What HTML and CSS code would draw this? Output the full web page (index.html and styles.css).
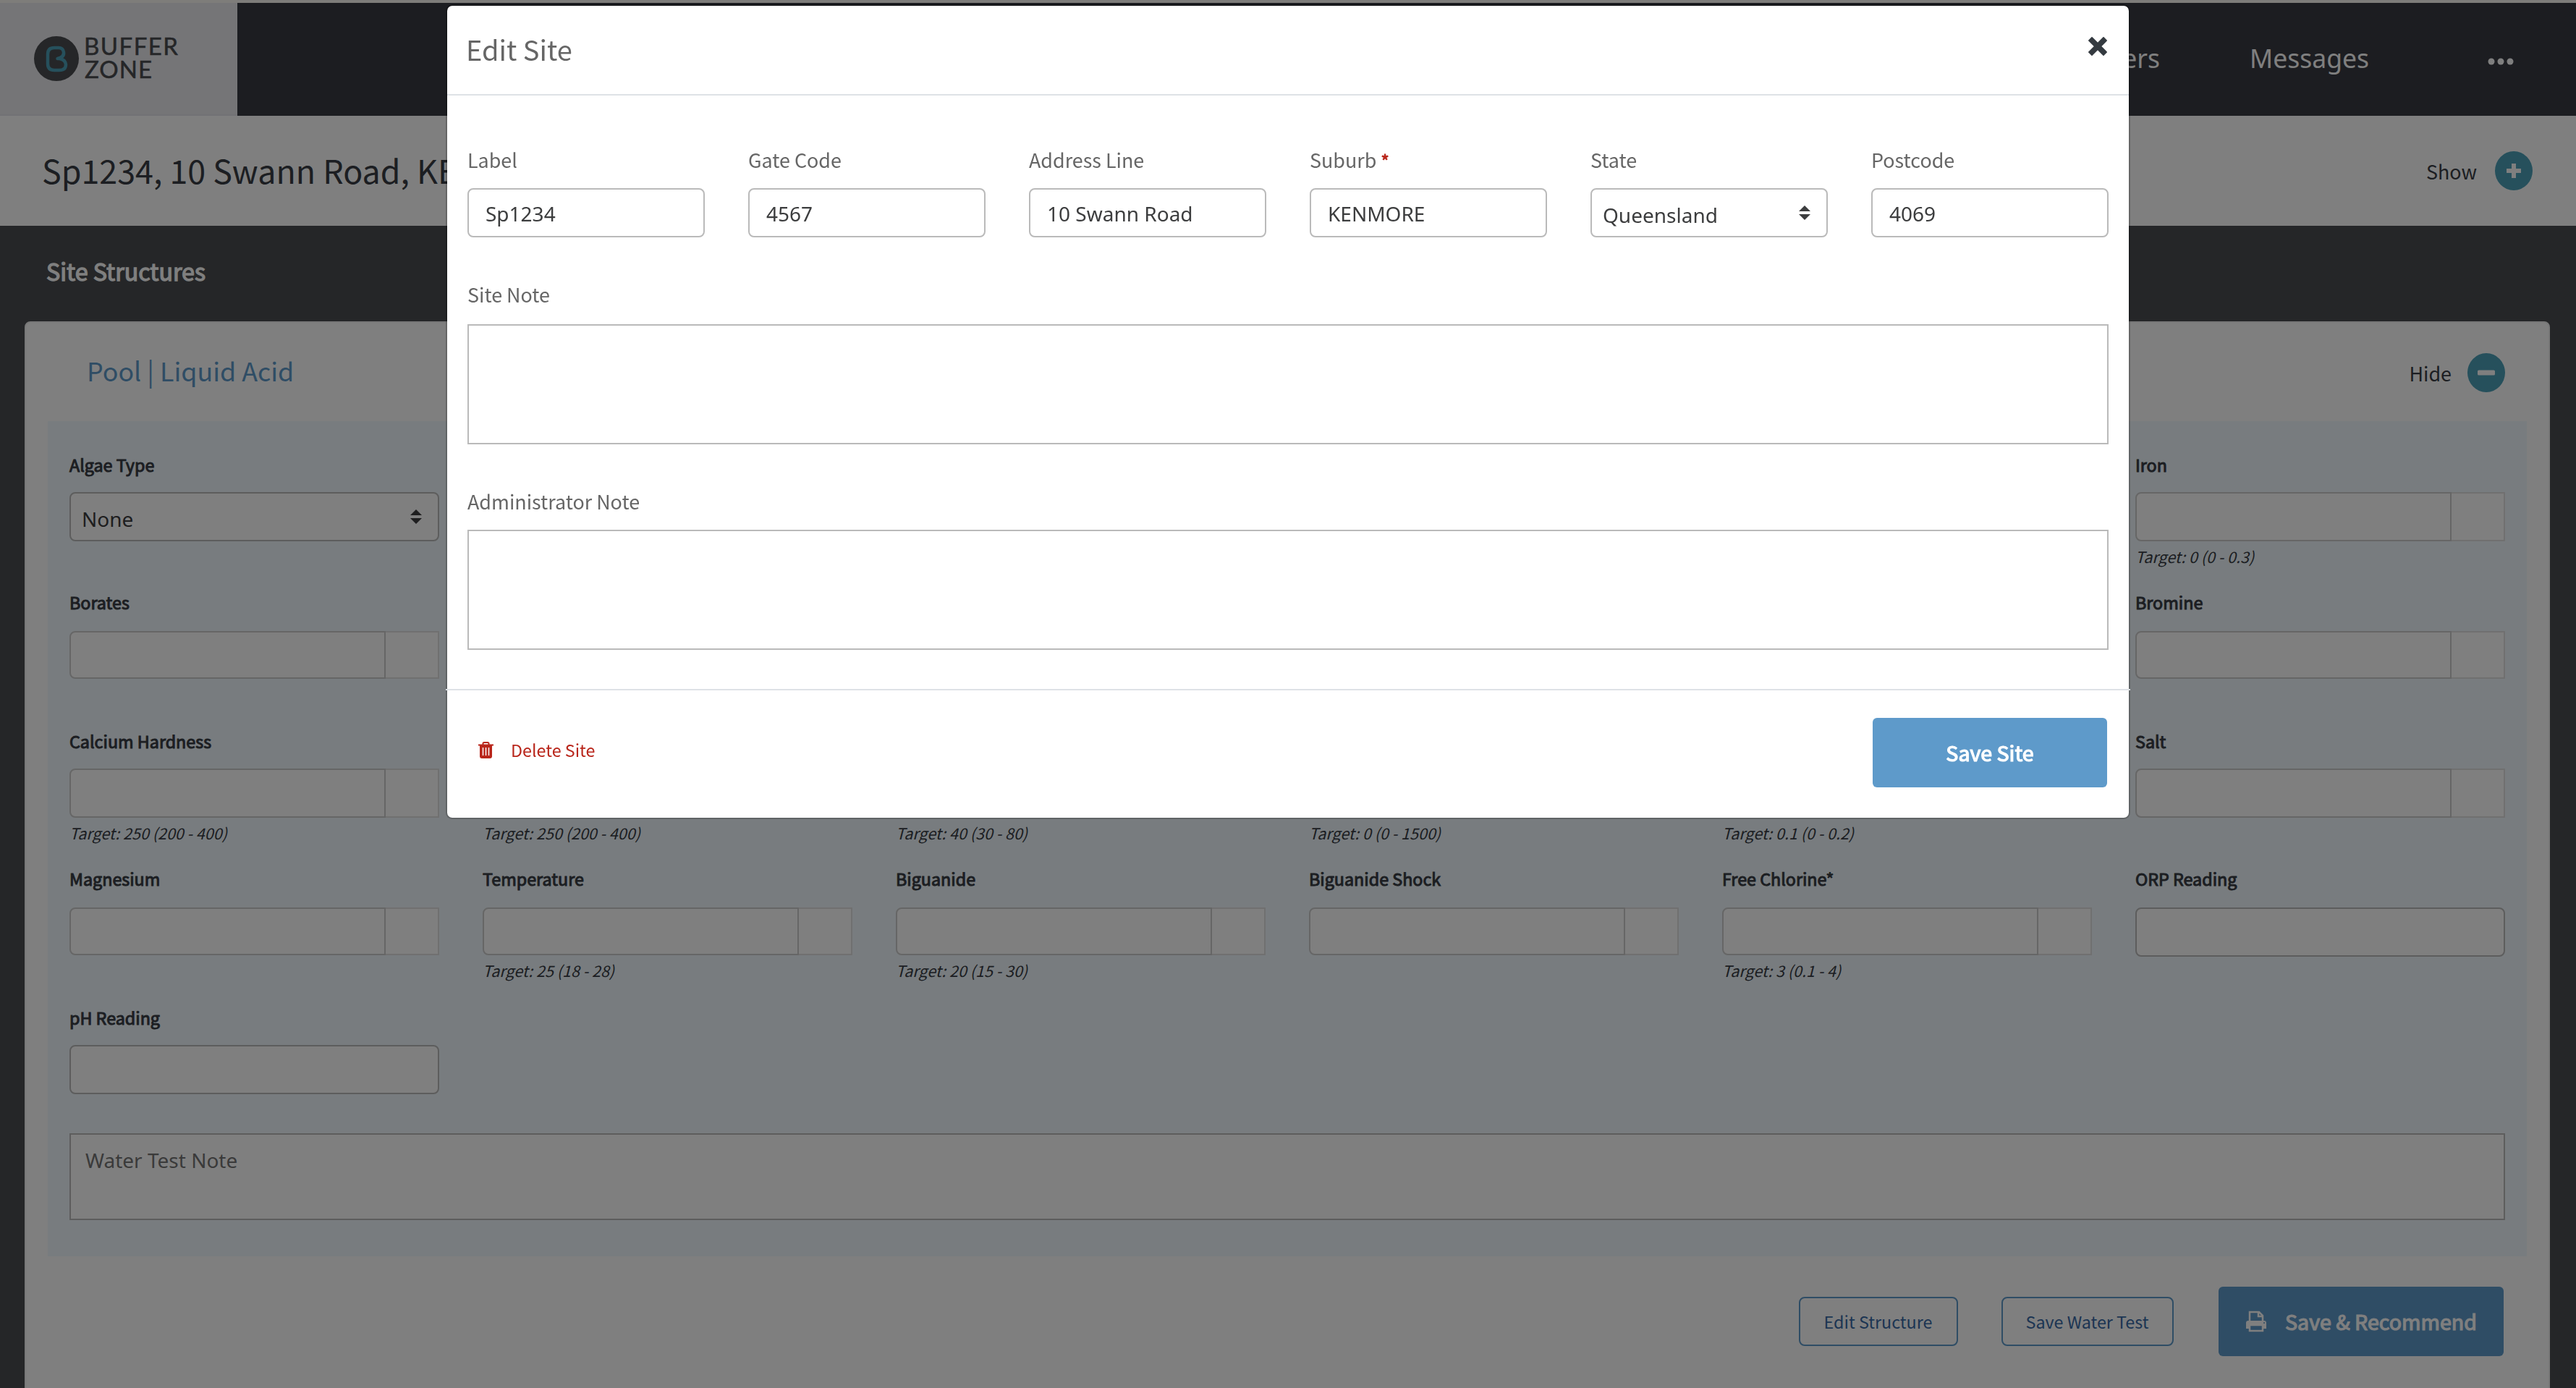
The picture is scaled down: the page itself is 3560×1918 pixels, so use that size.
FILE: index.html
```
<!DOCTYPE html>
<html lang="en">
<head>
    <meta charset="UTF-8">
    <meta name="viewport" content="width=device-width, initial-scale=1.0">
    <title>Edit Site</title>
    <link rel="stylesheet" href="styles.css">
</head>
<body>
    <header class="navbar">
        <a class="brand">
            <svg width="230" height="70" viewBox="0 0 230 70">
                <circle cx="33" cy="33" r="31" fill="#4a4c50"/>
                <path d="M37 33H34.500Q44 31 43 24Q42 18 36 18H30Q21 18 21 27V40Q21 49 30 49H37Q46 49 46 41Q45 34 37 33" fill="none" stroke="#4ca0b8" stroke-width="4.500" stroke-linejoin="round"/>
                <text x="71" y="28" textLength="130" class="brand-text">BUFFER</text>
                <text x="72" y="60" textLength="93" class="brand-text">ZONE</text>
            </svg>
        </a>
        <nav class="nav-links">
            <a>Customers</a>
            <a>Messages</a>
            <svg class="dots" width="36" height="10" viewBox="0 0 36 10" fill="#fff">
                <circle cx="5" cy="5" r="4.500"/>
                <circle cx="18" cy="5" r="4.500"/>
                <circle cx="31" cy="5" r="4.500"/>
            </svg>
        </nav>
    </header>

    <section class="site-bar">
        <h1>Sp1234, 10 Swann Road, KENMORE</h1>
        <div class="toggle">
            <span>Show</span>
            <i class="round">
                <svg width="24" height="24" viewBox="0 0 24 24"><path d="M2 12H22M12 2V22" stroke="#fff" stroke-width="6"/></svg>
            </i>
        </div>
    </section>

    <main>
        <h2>Site Structures</h2>
        <div class="card">
            <div class="card-header">
                <h3>Pool | Liquid Acid</h3>
                <div class="toggle">
                    <span>Hide</span>
                    <i class="round">
                        <svg width="24" height="24" viewBox="0 0 24 24"><rect y="8.500" width="24" height="7" rx="1.500" fill="#fff"/></svg>
                    </i>
                </div>
            </div>

            <div class="panel">
                <div class="row">
                    <div class="field">
                        <label>Algae Type</label>
                        <div class="select-wrap">
                            <select class="control"><option>None</option></select>
                            <svg class="arrows" width="16" height="20" viewBox="0 0 16 20"><path d="M0 8L8 0L16 8ZM0 12L8 20L16 12Z"/></svg>
                        </div>
                    </div>
                    <div class="field"></div>
                    <div class="field"></div>
                    <div class="field"></div>
                    <div class="field"></div>
                    <div class="field">
                        <label>Iron</label>
                        <div class="group"><input type="text"><span></span></div>
                        <em>Target: 0 (0 - 0.3)</em>
                    </div>
                </div>
                <div class="row">
                    <div class="field">
                        <label>Borates</label>
                        <div class="group"><input type="text"><span></span></div>
                    </div>
                    <div class="field"></div>
                    <div class="field"></div>
                    <div class="field"></div>
                    <div class="field"></div>
                    <div class="field">
                        <label>Bromine</label>
                        <div class="group"><input type="text"><span></span></div>
                    </div>
                </div>
                <div class="row">
                    <div class="field">
                        <label>Calcium Hardness</label>
                        <div class="group"><input type="text"><span></span></div>
                        <em>Target: 250 (200 - 400)</em>
                    </div>
                    <div class="field">
                        <label></label>
                        <div class="group"><input type="text"><span></span></div>
                        <em>Target: 250 (200 - 400)</em>
                    </div>
                    <div class="field">
                        <label></label>
                        <div class="group"><input type="text"><span></span></div>
                        <em>Target: 40 (30 - 80)</em>
                    </div>
                    <div class="field">
                        <label></label>
                        <div class="group"><input type="text"><span></span></div>
                        <em>Target: 0 (0 - 1500)</em>
                    </div>
                    <div class="field">
                        <label></label>
                        <div class="group"><input type="text"><span></span></div>
                        <em>Target: 0.1 (0 - 0.2)</em>
                    </div>
                    <div class="field">
                        <label>Salt</label>
                        <div class="group"><input type="text"><span></span></div>
                    </div>
                </div>
                <div class="row">
                    <div class="field">
                        <label>Magnesium</label>
                        <div class="group"><input type="text"><span></span></div>
                    </div>
                    <div class="field">
                        <label>Temperature</label>
                        <div class="group"><input type="text"><span></span></div>
                        <em>Target: 25 (18 - 28)</em>
                    </div>
                    <div class="field">
                        <label>Biguanide</label>
                        <div class="group"><input type="text"><span></span></div>
                        <em>Target: 20 (15 - 30)</em>
                    </div>
                    <div class="field">
                        <label>Biguanide Shock</label>
                        <div class="group"><input type="text"><span></span></div>
                    </div>
                    <div class="field">
                        <label>Free Chlorine*</label>
                        <div class="group"><input type="text"><span></span></div>
                        <em>Target: 3 (0.1 - 4)</em>
                    </div>
                    <div class="field">
                        <label>ORP Reading</label>
                        <input type="text" class="control">
                    </div>
                </div>
                <div class="row">
                    <div class="field">
                        <label>pH Reading</label>
                        <input type="text" class="control">
                    </div>
                </div>
                <textarea class="note" placeholder="Water Test Note"></textarea>
            </div>

            <div class="card-footer">
                <button class="btn-outline edit">Edit Structure</button>
                <button class="btn-outline test">Save Water Test</button>
                <button class="btn-primary recommend">
                    <svg width="30" height="30" viewBox="0 0 30 30" fill="none" stroke="#fff" stroke-width="2.500">
                        <path d="M6 15V2H19L24 7V15M18 2V8H24"/>
                        <path d="M1 25V17Q1 14 4 14H26Q29 14 29 17V25H24V20H6V25Z" fill="#fff" stroke="none"/>
                        <path d="M6 20H24V28H6Z"/>
                        <circle cx="26" cy="17" r="1" fill="#5e9aca" stroke="none"/>
                    </svg>
                    <span>Save &amp; Recommend</span>
                </button>
            </div>
        </div>
    </main>

    <div class="overlay">
        <div class="modal">
            <div class="modal-header">
                <h4>Edit Site</h4>
                <svg class="close" width="26" height="26" viewBox="0 0 26 26"><path d="M5 5L21 21M21 5L5 21" stroke="#343a40" stroke-width="7.500" stroke-linecap="square" stroke-linejoin="round"/></svg>
            </div>
            <div class="modal-body">
                <div class="modal-row">
                    <div class="modal-field">
                        <label>Label</label>
                        <input type="text" class="control" value="Sp1234">
                    </div>
                    <div class="modal-field">
                        <label>Gate Code</label>
                        <input type="text" class="control" value="4567">
                    </div>
                    <div class="modal-field">
                        <label>Address Line</label>
                        <input type="text" class="control" value="10 Swann Road">
                    </div>
                    <div class="modal-field">
                        <label>Suburb <b>*</b></label>
                        <input type="text" class="control" value="KENMORE">
                    </div>
                    <div class="modal-field">
                        <label>State</label>
                        <div class="select-wrap">
                            <select class="control"><option>Queensland</option></select>
                            <svg class="arrows" width="16" height="20" viewBox="0 0 16 20"><path d="M0 8L8 0L16 8ZM0 12L8 20L16 12Z"/></svg>
                        </div>
                    </div>
                    <div class="modal-field">
                        <label>Postcode</label>
                        <input type="text" class="control" value="4069">
                    </div>
                </div>
                <div class="modal-field site-note">
                    <label>Site Note</label>
                    <textarea></textarea>
                </div>
                <div class="modal-field">
                    <label>Administrator Note</label>
                    <textarea></textarea>
                </div>
            </div>
            <div class="modal-footer">
                <a class="delete">
                    <svg width="21" height="23" viewBox="0 0 21 23">
                        <path d="M6.500 4V2.500Q6.500 1 8 1H13Q14.500 1 14.500 2.500V4" fill="none" stroke="#b9261b" stroke-width="2"/>
                        <path d="M0 3.500H21V5.500H19V20Q19 23 16 23H5Q2 23 2 20V5.500H0Z" fill="#b9261b"/>
                        <path d="M6.500 8V19M10.500 8V19M14.500 8V19" stroke="#fff" stroke-width="1.500"/>
                    </svg>
                    Delete Site
                </a>
                <button class="btn-primary save">Save Site</button>
            </div>
        </div>
    </div>
</body>
</html>
```
FILE: styles.css
```
* {
    box-sizing: border-box;
}

body {
    margin: 0;
    height: 1918px;
    overflow: hidden;
    background-color: #4a4c50;
    border-top: 4px solid #fcfaf4;
    font-family: "Noto Sans CJK SC", "Open Sans", sans-serif;
    color: #383c44;
}

h1, h2, h3, h4 {
    margin: 0;
    font-weight: normal;
}

input, select, textarea {
    display: block;
    width: 100%;
    margin: 0;
    background-color: #fff;
    border: 2px solid #bababa;
    border-radius: 0;
    font-family: "Noto Sans", sans-serif;
    font-size: 28px;
    color: #3c3d3e;
    resize: none;
    appearance: none;
}

button {
    margin: 0;
    padding: 0;
    font-family: inherit;
}

/* top navigation */
.navbar {
    display: flex;
    justify-content: space-between;
    height: 156px;
    background-color: #383a42;
}

.brand {
    width: 328px;
    padding: 44px 0 0 45px;
    background-color: #eaeaee;
    border-bottom: 2px solid #e4e5ea;
}

.brand svg {
    display: block;
}

.brand-text {
    font-family: Lato, sans-serif;
    font-size: 33px;
    fill: #4a4c50;
    stroke: #4a4c50;
    stroke-width: 0.500px;
}

.nav-links {
    display: flex;
    align-items: center;
    padding: 0 86px 4px 0;
    font-family: "Noto Sans", sans-serif;
    font-size: 35.500px;
    color: #fff;
}

.nav-links a {
    margin-right: 124px;
}

.nav-links .dots {
    margin: 9px 0 0 40px;
}

/* site title bar */
.site-bar {
    display: flex;
    justify-content: space-between;
    align-items: center;
    height: 152px;
    padding: 0 60px 0 58px;
    background-color: #fff;
}

.site-bar h1 {
    padding-bottom: 3px;
    font-size: 44.800px;
}

.toggle {
    display: flex;
    align-items: center;
    gap: 25px;
    font-size: 26.900px;
}

.round {
    display: flex;
    align-items: center;
    justify-content: center;
    width: 52px;
    height: 54px;
    border-radius: 50%;
    background-color: #4ca0b8;
}

main {
    padding: 0 36px 0 34px;
}

main h2 {
    height: 132px;
    padding-left: 30px;
    font-size: 32.200px;
    line-height: 125px;
    color: #fff;
    -webkit-text-stroke: 1.300px #fff;
}

.card {
    height: 1500px;
    background-color: #fff;
    border: 2px solid #f0f0f0;
    border-radius: 8px;
}

.card-header {
    display: flex;
    justify-content: space-between;
    align-items: center;
    height: 136px;
    padding: 0 60px 0 84px;
}

.card-header h3 {
    padding-bottom: 6px;
    font-size: 35.800px;
    color: #5e9aca;
}

.card-header .toggle {
    padding-top: 2px;
    gap: 22px;
}

.panel {
    height: 1154px;
    margin: 0 30px;
    padding: 42px 30px 0;
    background-color: #f0f9fe;
}

.row {
    display: grid;
    grid-template-columns: repeat(6, 1fr);
    column-gap: 60px;
    height: 192px;
}

.row:nth-child(even) {
    height: 190px;
}

.row:nth-child(5) {
    height: 178px;
}

.field label {
    display: block;
    height: 36px;
    margin-bottom: 20px;
    font-size: 23.300px;
    line-height: 36px;
    -webkit-text-stroke: 1px #383c44;
}

.row:nth-child(even) label {
    line-height: 33px;
}

.field em {
    display: block;
    margin-top: 6px;
    font-size: 21.500px;
    line-height: 29px;
}

.control {
    height: 68px;
    padding: 2px 23px 0;
    border-radius: 8px;
}

.select-wrap {
    position: relative;
}

.select-wrap .control {
    padding: 5px 15px 0;
}

.arrows {
    position: absolute;
    right: 24px;
    top: 24px;
    fill: #3c3d3e;
}

.group {
    display: flex;
    height: 68px;
}

.row:nth-child(even) .group {
    height: 66px;
}

.group input {
    flex: 1;
    border-color: #ccc;
    border-radius: 8px 0 0 8px;
}

.group span {
    width: 74px;
    background-color: #fff;
    border: 2px solid #e0e0e0;
    border-left: 0;
}

.note {
    height: 120px;
    padding: 16px 20px;
    line-height: 38px;
}

.note::placeholder {
    color: #757575;
}

.card-footer {
    display: flex;
    justify-content: flex-end;
    align-items: center;
    padding: 42px 62px 0 0;
}

.btn-outline {
    height: 68px;
    padding-right: 1px;
    border: 2px solid #5e9aca;
    border-radius: 8px;
    background-color: #fff;
    font-size: 23.300px;
    color: #386aa6;
}

.edit {
    width: 220px;
    margin-right: 60px;
}

.test {
    width: 238px;
    margin-right: 62px;
}

.btn-primary {
    height: 96px;
    padding-bottom: 1px;
    border: 0;
    border-radius: 6px;
    background-color: #5e9aca;
    font-size: 28.600px;
    color: #fff;
    -webkit-text-stroke: 1.200px #fff;
}

.recommend {
    display: flex;
    align-items: center;
    justify-content: center;
    gap: 25px;
    width: 394px;
}

/* modal */
.overlay {
    position: fixed;
    top: 0;
    right: 0;
    bottom: 0;
    left: 0;
    padding-top: 6px;
    background-color: rgba(0, 0, 0, 0.5);
}

.modal {
    width: 2328px;
    margin: 0 auto;
    background-color: #fff;
    background-clip: padding-box;
    border: 2px solid rgba(0, 0, 0, 0.2);
    border-radius: 9px;
}

.modal-header {
    display: flex;
    justify-content: space-between;
    align-items: center;
    height: 124px;
    padding: 0 30px 0 26px;
    border-bottom: 2px solid #dee2e6;
}

.modal-header h4 {
    padding-bottom: 4px;
    font-size: 38px;
    color: #666;
}

.close {
    margin-bottom: 10px;
}

.modal-body {
    padding: 70px 28px 54px;
}

.modal-row {
    display: grid;
    grid-template-columns: repeat(6, 1fr);
    column-gap: 60px;
}

.modal-field label {
    display: block;
    height: 36px;
    margin-bottom: 22px;
    font-size: 26.900px;
    line-height: 38px;
    color: #666;
}

.modal-field b {
    font-size: 24px;
    font-weight: normal;
    color: #b9261b;
    -webkit-text-stroke: 1px #b9261b;
}

.modal-field textarea {
    height: 166px;
}

.site-note {
    margin: 60px 0;
}

.site-note label {
    margin-bottom: 24px;
}

.modal-footer {
    display: flex;
    justify-content: space-between;
    align-items: center;
    height: 178px;
    margin: 0 -2px;
    padding: 0 32px 4px 45px;
    border-top: 2px solid #dee2e6;
}

.delete {
    display: flex;
    align-items: center;
    gap: 24px;
    padding-bottom: 8px;
    font-size: 23.300px;
    color: #b9261b;
}

.save {
    width: 324px;
}
```
